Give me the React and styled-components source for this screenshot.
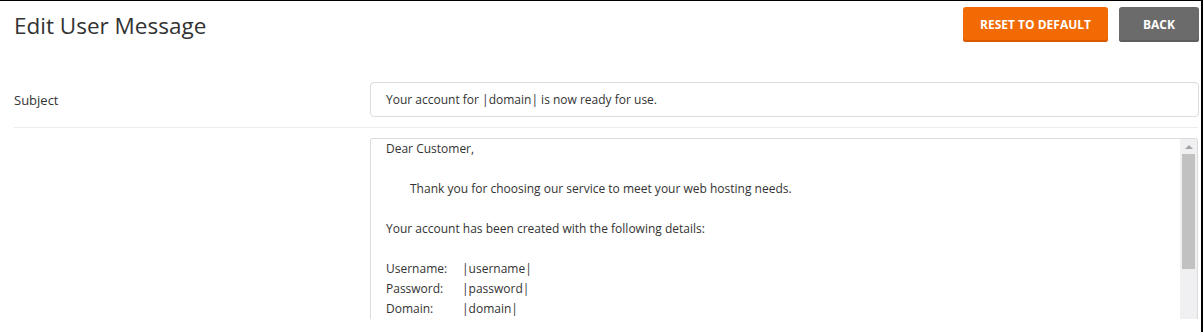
import styled, { createGlobalStyle } from "styled-components";

const GlobalStyle = createGlobalStyle`
    html, body {
        margin: 0;
        padding: 0;
        background: #ffffff;
    }

    body {
        font-family: "Open Sans", "Liberation Sans", sans-serif;
        color: #333333;
        border-top: 1px solid #000000;
        border-right: 2px solid #000000;
        height: 331px;
        overflow: hidden;
    }
`;

const details = [
    { label: "Username:", value: "|username|" },
    { label: "Password:", value: "|password|" },
    { label: "Domain:", value: "|domain|" },
];

const App = () => {
    return (
        <Page>
            <GlobalStyle />

            <Header>
                <Title>Edit User Message</Title>
                <Actions>
                    <Button variant="primary">Reset to Default</Button>
                    <Button variant="secondary">Back</Button>
                </Actions>
            </Header>

            <Row divided={true}>
                <Label>Subject</Label>
                <Input>Your account for |domain| is now ready for use.</Input>
            </Row>

            <Row divided={false}>
                <Label />
                <TextArea>
                    <Content>
                        <Line>Dear Customer,</Line>
                        <Line />
                        <Line indent={true}>
                            Thank you for choosing our service to meet your web hosting needs.
                        </Line>
                        <Line />
                        <Line>Your account has been created with the following details:</Line>
                        <Line />
                        {details.map(item => (
                            <Line key={item.label}>
                                <Key>{item.label}</Key>
                                {item.value}
                            </Line>
                        ))}
                    </Content>

                    <Scrollbar>
                        <ArrowUp />
                        <Thumb />
                    </Scrollbar>
                </TextArea>
            </Row>
        </Page>
    );
}

export default App;

const Page = styled.div`
    padding: 0 2px 0 14px;
`;

const Header = styled.div`
    display: flex;
    align-items: flex-start;
    justify-content: space-between;
    padding-top: 6px;
    margin-bottom: 40px;
`;

const Title = styled.h1`
    margin: 4px 0 0;
    font-size: 22.5px;
    font-weight: 400;
    line-height: 30px;
    color: #333333;
`;

const Actions = styled.div`
    display: flex;
    gap: 11px;
`;

const Button = styled.button`
    height: 35px;
    padding: 0 16px;
    border: none;
    border-radius: 3px;
    font-family: "Open Sans", "Liberation Sans", sans-serif;
    font-size: 12px;
    font-weight: 700;
    text-transform: uppercase;
    color: #ffffff;
    background: ${props => props.variant === "primary" ? "#f26a04" : "#6b6b6b"};
    box-shadow: inset 0 -2px 0 ${props => props.variant === "primary" ? "#d95b00" : "#5e5e5e"};
    min-width: ${props => props.variant === "primary" ? "145px" : "80px"};
    cursor: pointer;
`;

const Row = styled.div`
    display: flex;
    align-items: ${props => props.divided ? "center" : "flex-start"};
    padding-bottom: ${props => props.divided ? "10px" : "0"};
    margin-bottom: ${props => props.divided ? "10px" : "0"};
    border-bottom: ${props => props.divided ? "1px solid #ececec" : "none"};
    margin-right: 1px;
`;

const Label = styled.div`
    width: 356px;
    flex-shrink: 0;
    font-size: 13px;
    color: #333333;
`;

const Input = styled.div`
    flex: 1;
    height: 35px;
    box-sizing: border-box;
    margin-right: -1px;
    padding: 0 15px;
    display: flex;
    align-items: center;
    border: 1px solid #dcdcdc;
    border-radius: 4px;
    font-size: 12px;
    color: #333333;
    white-space: pre;
`;

const TextArea = styled.div`
    flex: 1;
    display: flex;
    height: 181px;
    box-sizing: border-box;
    border: 1px solid #dcdcdc;
    border-bottom: none;
    border-radius: 3px 3px 0 0;
    overflow: hidden;
`;

const Content = styled.div`
    flex: 1;
    padding: 0 15px;
    font-size: 12px;
    line-height: 20px;
    color: #333333;
`;

const Line = styled.div`
    height: 20px;
    white-space: pre;
    padding-left: ${props => props.indent ? "24px" : "0"};
`;

const Key = styled.span`
    display: inline-block;
    width: 76px;
`;

const Scrollbar = styled.div`
    width: 17px;
    flex-shrink: 0;
    background: #f0eff2;
    display: flex;
    flex-direction: column;
    align-items: center;
`;

const ArrowUp = styled.div`
    margin: 6px 0 5px;
    width: 0;
    height: 0;
    border-left: 4px solid transparent;
    border-right: 4px solid transparent;
    border-bottom: 4px solid #a3a3a3;
`;

const Thumb = styled.div`
    width: 13px;
    height: 115px;
    background: #c1c1c1;
`;
